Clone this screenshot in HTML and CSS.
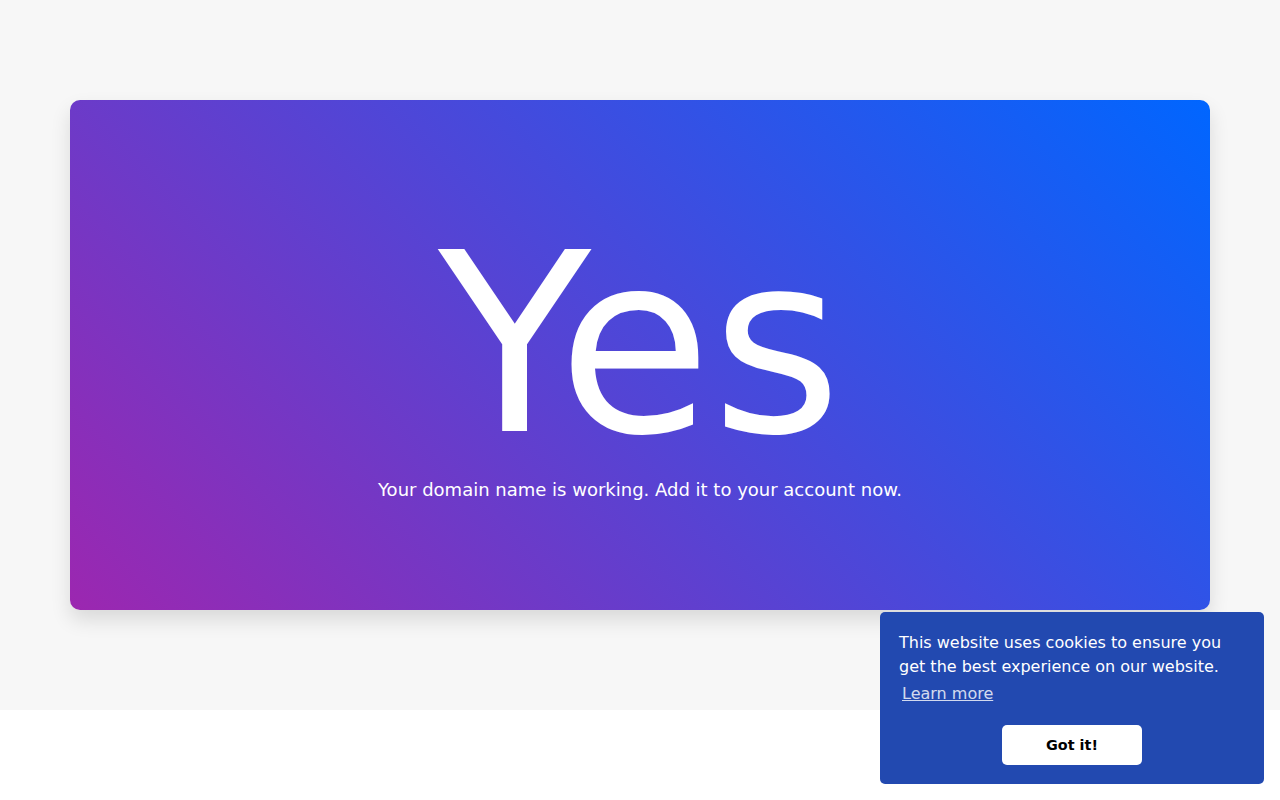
FILE: index.html
```html
<!DOCTYPE html>
<html lang="en">
<head>
<meta charset="utf-8">
<title>Yes</title>
<link rel="stylesheet" href="styles.css">
</head>
<body>
  <section class="hero">
    <div class="card">
      <h1 class="title">Yes</h1>
      <p class="lead">Your domain name is working. Add it to your account now.</p>
    </div>
  </section>

  <div class="cookie" role="dialog" aria-label="cookieconsent">
    <span class="cookie-message">This website uses cookies to ensure you get the best experience on our website. <a class="cookie-link" href="#">Learn more</a></span>
    <div class="cookie-actions">
      <a class="cookie-btn" href="#">Got it!</a>
    </div>
  </div>
</body>
</html>
```

FILE: styles.css
```css
html, body {
  margin: 0;
  padding: 0;
}

body {
  font-family: "DejaVu Sans", sans-serif;
  background: #ffffff;
  color: #212529;
}

.hero {
  background: #f7f7f7;
  padding: 100px 0;
  display: flex;
  justify-content: center;
}

.card {
  width: 1140px;
  height: 510px;
  box-sizing: border-box;
  padding-top: 120px;
  border-radius: 10px;
  background: linear-gradient(45deg, #9c27b0, #0066ff);
  box-shadow: 0 10px 20px rgba(0, 0, 0, 0.12);
  color: #ffffff;
  display: flex;
  flex-direction: column;
  align-items: center;
}

.title {
  margin: 0;
  font-size: 250px;
  line-height: 250px;
  font-weight: 400;
}

.lead {
  margin: 6px 0 0;
  font-size: 18px;
  line-height: 27px;
}

/* cookie consent popup */
.cookie {
  position: fixed;
  right: 16px;
  bottom: 16px;
  width: 384px;
  box-sizing: border-box;
  padding: 19px 19px 19px;
  background: #2249b0;
  color: #ffffff;
  border-radius: 5px;
  font-size: 16px;
  line-height: 24px;
  display: flex;
  flex-direction: column;
}

.cookie-message {
  display: block;
  margin-bottom: 16px;
}

.cookie-link {
  display: inline-block;
  padding: 3px;
  color: #ffffff;
  opacity: 0.8;
  text-decoration: underline;
}

.cookie-actions {
  display: flex;
  justify-content: center;
}

.cookie-btn {
  width: 140px;
  height: 40px;
  display: flex;
  align-items: center;
  justify-content: center;
  background: #ffffff;
  color: #000000;
  font-size: 14.4px;
  font-weight: 700;
  text-decoration: none;
  border-radius: 5px;
}
```
